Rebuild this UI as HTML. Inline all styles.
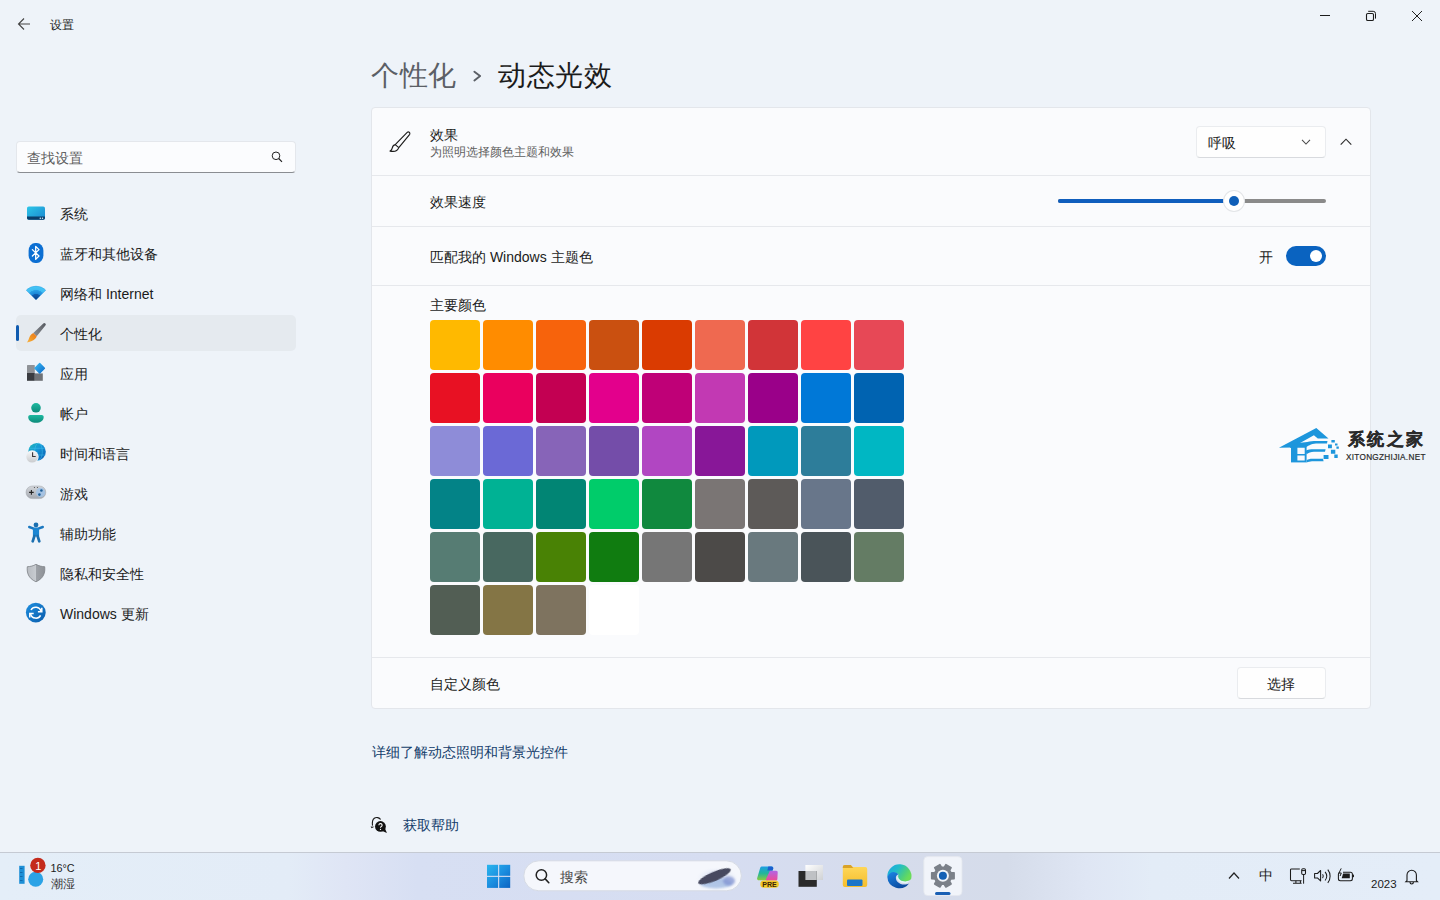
<!DOCTYPE html>
<html><head><meta charset="utf-8">
<style>
*{box-sizing:border-box;margin:0;padding:0}
html,body{width:1440px;height:900px;overflow:hidden}
body{background:#eef3f9;font-family:"Liberation Sans",sans-serif;color:#1b1b1b;position:relative}
.a{position:absolute}
.t14{font-size:14px;line-height:22px;white-space:nowrap}
.t12{font-size:12px;line-height:18px;white-space:nowrap}
.nav{position:absolute;left:16px;width:280px;height:36px}
.nav .lbl{position:absolute;left:44px;top:8px;font-size:14px;line-height:22px;white-space:nowrap;color:#1b1b1b}
.nav .ic{position:absolute;left:10px;top:8px;width:20px;height:20px}
.card{position:absolute;left:371px;top:107px;width:1000px;height:602px;background:#fafbfd;border:1px solid #e3e6eb;border-radius:4px}
.div{position:absolute;left:0;width:998px;height:1px;background:#e6e8ec}
.sw{position:absolute;width:50px;height:50px;border-radius:4px}
</style></head><body>

<!-- title bar -->
<svg class="a" style="left:17px;top:17px" width="14" height="14" viewBox="0 0 14 14"><path d="M7 1.5 1.5 7 7 12.5M1.5 7H13" fill="none" stroke="#444" stroke-width="1.1"/></svg>
<div class="a t12" style="left:50px;top:16px;color:#1b1b1b">设置</div>

<svg class="a" style="left:1319px;top:10px" width="12" height="12" viewBox="0 0 12 12"><path d="M1 5.5h10" stroke="#1b1b1b" stroke-width="1"/></svg>
<svg class="a" style="left:1365px;top:10px" width="12" height="12" viewBox="0 0 12 12"><rect x="1.5" y="3.5" width="7" height="7" rx="1.3" fill="none" stroke="#1b1b1b" stroke-width="1.1"/><path d="M3.2 1.3h5a2.3 2.3 0 0 1 2.3 2.3v5" fill="none" stroke="#1b1b1b" stroke-width="1"/></svg>
<svg class="a" style="left:1411px;top:10px" width="12" height="12" viewBox="0 0 12 12"><path d="M1 1l10 10M11 1 1 11" stroke="#222" stroke-width="1"/></svg>

<!-- search -->
<div class="a" style="left:16px;top:141px;width:280px;height:32px;background:#fbfcfe;border:1px solid #e4e7ec;border-bottom:1px solid #8a8d92;border-radius:4px"></div>
<div class="a t14" style="left:27px;top:147px;color:#5e5e5e">查找设置</div>
<svg class="a" style="left:270px;top:150px" width="14" height="14" viewBox="0 0 14 14"><circle cx="6" cy="5.8" r="3.8" fill="none" stroke="#222" stroke-width="1"/><path d="M8.7 8.5l3.3 3.4" stroke="#222" stroke-width="1.1"/></svg>

<!-- nav -->
<div class="nav" style="top:195px"><div class="lbl">系统</div></div>
<div class="nav" style="top:235px"><div class="lbl">蓝牙和其他设备</div></div>
<div class="nav" style="top:275px"><div class="lbl">网络和 Internet</div></div>
<div class="nav" style="top:315px;background:#e5eaef;border-radius:5px"><div class="a" style="left:0;top:10px;width:3px;height:16px;border-radius:2px;background:#0f5bb0"></div><div class="lbl">个性化</div></div>
<div class="nav" style="top:355px"><div class="lbl">应用</div></div>
<div class="nav" style="top:395px"><div class="lbl">帐户</div></div>
<div class="nav" style="top:435px"><div class="lbl">时间和语言</div></div>
<div class="nav" style="top:475px"><div class="lbl">游戏</div></div>
<div class="nav" style="top:515px"><div class="lbl">辅助功能</div></div>
<div class="nav" style="top:555px"><div class="lbl">隐私和安全性</div></div>
<div class="nav" style="top:595px"><div class="lbl">Windows 更新</div></div>

<svg class="a" style="left:0;top:0" width="60" height="640" viewBox="0 0 60 640">
<defs>
<linearGradient id="gSys" x1="0" y1="0" x2="1" y2="1"><stop offset="0" stop-color="#2cc6e8"/><stop offset="1" stop-color="#1a86d0"/></linearGradient>
<radialGradient id="gWifi" gradientUnits="userSpaceOnUse" cx="36" cy="300" r="13.8"><stop offset="0" stop-color="#0a3f86"/><stop offset=".42" stop-color="#0f5eb0"/><stop offset=".45" stop-color="#1a86d6"/><stop offset=".7" stop-color="#2a9fe6"/><stop offset=".73" stop-color="#3dbbf2"/><stop offset="1" stop-color="#45c6f6"/></radialGradient>
<linearGradient id="gBrush" x1="1" y1="0" x2="0" y2="1"><stop offset="0" stop-color="#54585e"/><stop offset="1" stop-color="#8f9398"/></linearGradient>
<linearGradient id="gTip" x1="1" y1="0" x2="0" y2="1"><stop offset="0" stop-color="#e8741a"/><stop offset=".6" stop-color="#f29a26"/><stop offset="1" stop-color="#f7b64a"/></linearGradient>
<linearGradient id="gDia" x1="0" y1="0" x2="1" y2="1"><stop offset="0" stop-color="#36b8f2"/><stop offset="1" stop-color="#0e6ccc"/></linearGradient>
<linearGradient id="gAcc" x1="0" y1="0" x2="0" y2="1"><stop offset="0" stop-color="#1db9a0"/><stop offset="1" stop-color="#0d8a7a"/></linearGradient>
<linearGradient id="gGlobe" x1="0" y1="0" x2="1" y2="1"><stop offset="0" stop-color="#1fb8b8"/><stop offset=".45" stop-color="#1596d6"/><stop offset="1" stop-color="#0a58ae"/></linearGradient>
<linearGradient id="gClock" x1="0" y1="0" x2="0" y2="1"><stop offset="0" stop-color="#f7f7f8"/><stop offset="1" stop-color="#c9cbce"/></linearGradient>
<linearGradient id="gPad" x1="0" y1="0" x2="0" y2="1"><stop offset="0" stop-color="#d3d6db"/><stop offset="1" stop-color="#a5a9b0"/></linearGradient>
<linearGradient id="gShield" x1="0" y1="0" x2="1" y2="0"><stop offset="0" stop-color="#b8bcc2"/><stop offset=".5" stop-color="#c8ccd1"/><stop offset=".5" stop-color="#9ea2a8"/><stop offset="1" stop-color="#8d9197"/></linearGradient>
<linearGradient id="gUpd" x1="0" y1="0" x2="1" y2="1"><stop offset="0" stop-color="#1e8fe0"/><stop offset="1" stop-color="#0b5cab"/></linearGradient>
</defs>
<!-- system -->
<rect x="27" y="206.5" width="18" height="13.3" rx="1.8" fill="url(#gSys)"/>
<path d="M27 216.6h18v1.4a1.8 1.8 0 0 1-1.8 1.8H28.8a1.8 1.8 0 0 1-1.8-1.8z" fill="#0b3e6b"/>
<circle cx="40.3" cy="218.2" r=".75" fill="#d6ecf8"/><circle cx="42.5" cy="218.2" r=".75" fill="#d6ecf8"/>
<!-- bluetooth -->
<rect x="28.6" y="243" width="14.8" height="20" rx="6.6" ry="7.6" fill="#0c6fd3"/>
<path d="M32.4 249.6l6.6 6.4-3.3 3.4v-13l3.3 3.2-6.6 6.4" fill="none" stroke="#fff" stroke-width="1.3" stroke-linejoin="round" stroke-linecap="round"/>
<!-- wifi -->
<path d="M36 300 26.2 290.2A13.8 13.8 0 0 1 45.8 290.2Z" fill="url(#gWifi)" stroke="#1a86d6" stroke-width=".3" stroke-linejoin="round"/>
<!-- brush -->
<path d="M43.3 323.6A1.45 1.45 0 0 1 45.4 325.6L36.7 336.2 33.3 333z" fill="url(#gBrush)"/>
<path d="M33.3 333C30.4 334.4 29.4 337 28.6 339.5 28.2 340.6 27.6 341.6 26.9 342.4 29.5 342.1 33 341 35.2 338.7 36 337.9 36.5 337.1 36.7 336.2z" fill="url(#gTip)"/>
<!-- apps -->
<rect x="27" y="365" width="7.8" height="8" rx=".6" fill="#8f9297"/>
<rect x="27" y="373" width="7.8" height="7.8" fill="#3a3c41"/>
<rect x="34.8" y="373.4" width="8" height="7.4" fill="#6f7277"/>
<path d="M39.7 363.5l4.7 4.8-4.7 4.7-4.7-4.7z" fill="url(#gDia)" stroke="url(#gDia)" stroke-width="1.4" stroke-linejoin="round"/>
<!-- account -->
<circle cx="36" cy="407.8" r="4.8" fill="url(#gAcc)"/>
<path d="M28.2 417c0-1.2.9-2 2-2h11.5c1.1 0 2 .8 2 2 0 3.6-3.5 5.8-7.7 5.8S28.2 420.6 28.2 417z" fill="url(#gAcc)"/>
<!-- time -->
<circle cx="37" cy="451.7" r="8.8" fill="url(#gGlobe)"/>
<ellipse cx="38.5" cy="451.7" rx="3.8" ry="8.6" fill="none" stroke="#43c4f0" stroke-width=".6" opacity=".8"/>
<path d="M29 448.3h16.2M28.6 455h16.8" stroke="#43c4f0" stroke-width=".6" opacity=".8"/>
<circle cx="32.1" cy="456.8" r="6.6" fill="#eef3f8"/>
<circle cx="32.1" cy="456.8" r="5.8" fill="url(#gClock)"/>
<path d="M32.6 452.3v4.2h3.1" fill="none" stroke="#3a3436" stroke-width="1.1"/>
<!-- games -->
<rect x="26" y="486" width="19.8" height="12.6" rx="6.3" fill="url(#gPad)" stroke="#9ea2a9" stroke-width=".5"/>
<path d="M31.4 490.1v4.6M29.1 492.4h4.6" stroke="#222" stroke-width="1.1"/>
<circle cx="40.6" cy="492.4" r="4.6" fill="#a3c3e6" opacity=".9"/>
<circle cx="41.4" cy="490.5" r="1.3" fill="#1f5f98"/><circle cx="39.4" cy="494.6" r="1.3" fill="#1f5f98"/>
<circle cx="34.4" cy="487.5" r=".5" fill="#333"/><circle cx="37.4" cy="487.5" r=".5" fill="#333"/>
<!-- accessibility -->
<circle cx="36" cy="524.9" r="2.4" fill="#1a6fb0"/>
<path d="M29.2 527l4.6 1.6h4.4l4.6-1.6" fill="none" stroke="#1b78c0" stroke-width="2.4" stroke-linecap="round" stroke-linejoin="round"/>
<rect x="32.9" y="528" width="6.2" height="8.6" rx="1.2" fill="#1a85d2"/>
<path d="M34.4 536 32.7 541.3M37.6 536l1.7 5.3" stroke="#1a6fb0" stroke-width="2.7" stroke-linecap="round"/>
<!-- shield -->
<path d="M36 564.3C38.8 566 41.8 566.6 44.7 566.7 45.3 572.3 44 578.2 36 581.8 28 578.2 26.7 572.3 27.3 566.7 30.2 566.6 33.2 566 36 564.3Z" fill="url(#gShield)" stroke="#7d8187" stroke-width=".8"/>
<!-- update -->
<circle cx="35.8" cy="612.6" r="9.9" fill="url(#gUpd)"/>
<path d="M41 611.3a5.4 5.4 0 0 0-10-1.3M30.6 614a5.4 5.4 0 0 0 10 1.3" fill="none" stroke="#fff" stroke-width="1.5"/>
<path d="M41.8 607.8v3.9h-3.9M29.8 617.5v-3.9h3.9" fill="none" stroke="#fff" stroke-width="1.5"/>
</svg>

<!-- header -->
<div class="a" style="left:371px;top:56px;font-size:28px;line-height:40px;letter-spacing:.6px;white-space:nowrap;color:#5b5f66">个性化</div>
<svg class="a" style="left:470px;top:68px" width="14" height="16" viewBox="0 0 14 16"><path d="M4.4 3.7 10.1 8.1 4.4 12.5" fill="none" stroke="#5b5f66" stroke-width="1.9" stroke-linecap="round" stroke-linejoin="round"/></svg>
<div class="a" style="left:498px;top:56px;font-size:28px;line-height:40px;letter-spacing:.6px;white-space:nowrap;color:#1b1b1b">动态光效</div>

<!-- card -->
<div class="card">
  <div class="div" style="top:67px"></div>
  <div class="div" style="top:118px"></div>
  <div class="div" style="top:177px"></div>
  <div class="div" style="top:549px"></div>
</div>

<svg class="a" style="left:384px;top:126px" width="32" height="32" viewBox="0 0 32 32"><path d="M11.2 18.6 23.2 6.4a1.6 1.6 0 0 1 2.5 1.9L14.8 21.6M11.2 18.6c-1.8.4-2.6 1.6-3 3.5-.3 1.5-1 2.3-2.1 3 2.8.6 7.3.4 8.7-3.5z" fill="none" stroke="#1b1b1b" stroke-width="1.15" stroke-linejoin="round"/></svg>
<div class="a t14" style="left:430px;top:124px">效果</div>
<div class="a t12" style="left:430px;top:143px;color:#5e5e5e">为照明选择颜色主题和效果</div>
<div class="a t14" style="left:430px;top:191px">效果速度</div>
<div class="a t14" style="left:430px;top:246px">匹配我的 Windows 主题色</div>
<div class="a t14" style="left:430px;top:294px">主要颜色</div>
<div class="a t14" style="left:430px;top:673px">自定义颜色</div>

<!-- dropdown -->
<div class="a" style="left:1196px;top:126px;width:130px;height:32px;background:#fefefe;border:1px solid #eaecef;border-bottom-color:#d8dade;border-radius:4px"></div>
<div class="a t14" style="left:1208px;top:132px">呼吸</div>
<svg class="a" style="left:1301px;top:137px" width="10" height="10" viewBox="0 0 10 10"><path d="M1 2.8l4 4.2 4-4.2" fill="none" stroke="#4a4a4a" stroke-width="1.05"/></svg>
<svg class="a" style="left:1339px;top:136px" width="14" height="12" viewBox="0 0 14 12"><path d="M1.7 8.6 7 3.2l5.3 5.4" fill="none" stroke="#2a2a2a" stroke-width="1.15"/></svg>

<!-- slider -->
<div class="a" style="left:1058px;top:199px;width:268px;height:4px;border-radius:2px;background:#8a8a8a"></div>
<div class="a" style="left:1058px;top:199px;width:176px;height:4px;border-radius:2px;background:#0f5ebd"></div>
<div class="a" style="left:1224px;top:191px;width:20px;height:20px;border-radius:50%;background:#fff;box-shadow:0 0 0 1px #e3e5e8"></div>
<div class="a" style="left:1228.7px;top:195.7px;width:10.6px;height:10.6px;border-radius:50%;background:#0f5fb8"></div>

<!-- toggle -->
<div class="a t14" style="left:1259px;top:246px">开</div>
<div class="a" style="left:1286px;top:246px;width:40px;height:20px;border-radius:10px;background:#0a63c0"></div>
<div class="a" style="left:1309.7px;top:249.7px;width:12.5px;height:12.5px;border-radius:50%;background:#fff"></div>

<!-- button -->
<div class="a" style="left:1237px;top:667px;width:89px;height:32px;background:#fefefe;border:1px solid #eaecef;border-bottom-color:#d8dade;border-radius:4px"></div>
<div class="a t14" style="left:1267px;top:673px">选择</div>

<div class="sw" style="left:430px;top:320px;background:#FFB900"></div>
<div class="sw" style="left:483px;top:320px;background:#FF8C00"></div>
<div class="sw" style="left:536px;top:320px;background:#F7630C"></div>
<div class="sw" style="left:589px;top:320px;background:#CA5010"></div>
<div class="sw" style="left:642px;top:320px;background:#DA3B01"></div>
<div class="sw" style="left:695px;top:320px;background:#EF6950"></div>
<div class="sw" style="left:748px;top:320px;background:#D13438"></div>
<div class="sw" style="left:801px;top:320px;background:#FF4343"></div>
<div class="sw" style="left:854px;top:320px;background:#E74856"></div>
<div class="sw" style="left:430px;top:373px;background:#E81123"></div>
<div class="sw" style="left:483px;top:373px;background:#EA005E"></div>
<div class="sw" style="left:536px;top:373px;background:#C30052"></div>
<div class="sw" style="left:589px;top:373px;background:#E3008C"></div>
<div class="sw" style="left:642px;top:373px;background:#BF0077"></div>
<div class="sw" style="left:695px;top:373px;background:#C239B3"></div>
<div class="sw" style="left:748px;top:373px;background:#9A0089"></div>
<div class="sw" style="left:801px;top:373px;background:#0078D7"></div>
<div class="sw" style="left:854px;top:373px;background:#0063B1"></div>
<div class="sw" style="left:430px;top:426px;background:#8E8CD8"></div>
<div class="sw" style="left:483px;top:426px;background:#6B69D6"></div>
<div class="sw" style="left:536px;top:426px;background:#8764B8"></div>
<div class="sw" style="left:589px;top:426px;background:#744DA9"></div>
<div class="sw" style="left:642px;top:426px;background:#B146C2"></div>
<div class="sw" style="left:695px;top:426px;background:#881798"></div>
<div class="sw" style="left:748px;top:426px;background:#0099BC"></div>
<div class="sw" style="left:801px;top:426px;background:#2D7D9A"></div>
<div class="sw" style="left:854px;top:426px;background:#00B7C3"></div>
<div class="sw" style="left:430px;top:479px;background:#038387"></div>
<div class="sw" style="left:483px;top:479px;background:#00B294"></div>
<div class="sw" style="left:536px;top:479px;background:#018574"></div>
<div class="sw" style="left:589px;top:479px;background:#00CC6A"></div>
<div class="sw" style="left:642px;top:479px;background:#10893E"></div>
<div class="sw" style="left:695px;top:479px;background:#7A7574"></div>
<div class="sw" style="left:748px;top:479px;background:#5D5A58"></div>
<div class="sw" style="left:801px;top:479px;background:#68768A"></div>
<div class="sw" style="left:854px;top:479px;background:#515C6B"></div>
<div class="sw" style="left:430px;top:532px;background:#567C73"></div>
<div class="sw" style="left:483px;top:532px;background:#486860"></div>
<div class="sw" style="left:536px;top:532px;background:#498205"></div>
<div class="sw" style="left:589px;top:532px;background:#107C10"></div>
<div class="sw" style="left:642px;top:532px;background:#767676"></div>
<div class="sw" style="left:695px;top:532px;background:#4C4A48"></div>
<div class="sw" style="left:748px;top:532px;background:#69797E"></div>
<div class="sw" style="left:801px;top:532px;background:#4A5459"></div>
<div class="sw" style="left:854px;top:532px;background:#647C64"></div>
<div class="sw" style="left:430px;top:585px;background:#525E54"></div>
<div class="sw" style="left:483px;top:585px;background:#847545"></div>
<div class="sw" style="left:536px;top:585px;background:#7E735F"></div>
<div class="sw" style="left:589px;top:585px;background:#FFFFFF"></div>

<!-- links -->
<div class="a t14" style="left:372px;top:741px;color:#143d6b">详细了解动态照明和背景光控件</div>
<div class="a t14" style="left:403px;top:814px;color:#143d6b">获取帮助</div>

<!-- taskbar -->
<div class="a" style="left:0;top:852px;width:1440px;height:48px;background:linear-gradient(90deg,#e4eef8 0%,#e3ecf7 20%,#dfe5f5 24%,#d7dff3 29%,#d6ddf1 50%,#d6dcec 62%,#d5dcea 70%,#dfe6f4 75.5%,#e3ecf7 80%,#e4edf8 100%);border-top:1px solid #c5cad3"></div>
<svg class="a" style="left:0;top:852px" width="1440" height="48" viewBox="0 852 1440 48">
<defs>
<linearGradient id="gWin" gradientUnits="userSpaceOnUse" x1="487" y1="864.6" x2="510" y2="888"><stop offset="0" stop-color="#2ab6ee"/><stop offset=".5" stop-color="#1c8fe0"/><stop offset="1" stop-color="#0b63c2"/></linearGradient>
<linearGradient id="gEdge" x1="0" y1="0" x2="1" y2="1"><stop offset="0" stop-color="#36c3d8"/><stop offset=".5" stop-color="#1e9ae6"/><stop offset="1" stop-color="#0b57b4"/></linearGradient>
<linearGradient id="gEdgeG" x1="0" y1="0" x2="1" y2="0"><stop offset="0" stop-color="#2fc6c0"/><stop offset="1" stop-color="#6ed95a"/></linearGradient>
<linearGradient id="gCop" x1="0" y1="0" x2="1" y2="1"><stop offset="0" stop-color="#2b8ff0"/><stop offset=".45" stop-color="#3fd39a"/><stop offset=".7" stop-color="#e868d0"/><stop offset="1" stop-color="#f58a5a"/></linearGradient>
<linearGradient id="gFold" x1="0" y1="0" x2="0" y2="1"><stop offset="0" stop-color="#ffd95c"/><stop offset="1" stop-color="#f5bd2c"/></linearGradient>
<linearGradient id="gTv" x1="0" y1="0" x2="1" y2="1"><stop offset="0" stop-color="#ffffff"/><stop offset="1" stop-color="#cfd1d4"/></linearGradient>
<filter id="fb1" x="-50%" y="-50%" width="200%" height="200%"><feGaussianBlur stdDeviation="1.2"/></filter><filter id="fb2" x="-50%" y="-50%" width="200%" height="200%"><feGaussianBlur stdDeviation=".5"/></filter>
<radialGradient id="gWhale" cx=".5" cy=".5" r=".5"><stop offset="0" stop-color="#a9b8e0"/><stop offset="1" stop-color="#e9eef8" stop-opacity="0"/></radialGradient>
</defs>
<!-- weather -->
<rect x="19.2" y="865.8" width="5.4" height="18" fill="#1d8fd6"/>
<path d="M20 868.5h2.5M20 872.5h2.5M20 876.5h2.5M20 880.5h2.5" stroke="#0e5fa0" stroke-width=".8"/>
<circle cx="35.7" cy="879.2" r="7.5" fill="#2ba3e6"/>
<circle cx="37.9" cy="865.4" r="7.7" fill="#c42b1c"/>
<text x="38.2" y="869.6" font-family="Liberation Sans" font-size="11" fill="#fff" text-anchor="middle">1</text>
<text x="50.5" y="871.8" font-family="Liberation Sans" font-size="10.8" fill="#1b1b1b">16°C</text>
<!-- start -->
<rect x="487" y="864.8" width="11.1" height="11" fill="url(#gWin)"/>
<rect x="499.2" y="864.8" width="11" height="11" fill="url(#gWin)"/>
<rect x="487" y="876.9" width="11.1" height="11" fill="url(#gWin)"/>
<rect x="499.2" y="876.9" width="11" height="11" fill="url(#gWin)"/>
<!-- search pill -->
<rect x="523.8" y="860.8" width="217.6" height="30" rx="15" fill="#f5f7fc" stroke="#d6dbe4" stroke-width="1"/>
<circle cx="541.4" cy="875" r="5.2" fill="none" stroke="#222" stroke-width="1.5"/>
<path d="M545.2 878.9l3.6 3.8" stroke="#222" stroke-width="1.6" stroke-linecap="round"/>
<ellipse cx="717" cy="878" rx="21" ry="11" fill="url(#gWhale)"/>
<ellipse cx="716" cy="883.5" rx="16" ry="5" fill="#a8c0e4" opacity=".85" filter="url(#fb1)"/>
<ellipse cx="729" cy="881" rx="6" ry="4.5" fill="#7d8fd0" opacity=".7" filter="url(#fb1)"/>
<ellipse cx="714.5" cy="876.3" rx="17.5" ry="4.6" transform="rotate(-23 714.5 876.3)" fill="#474a5e" filter="url(#fb2)"/>
<!-- copilot -->
<defs>
<linearGradient id="gCopL" x1="0" y1="0" x2="0" y2="1"><stop offset="0" stop-color="#1d9ee6"/><stop offset=".5" stop-color="#22b59c"/><stop offset="1" stop-color="#8ccc3c"/></linearGradient>
<linearGradient id="gCopR" x1="0" y1="0" x2="0" y2="1"><stop offset="0" stop-color="#b066e6"/><stop offset="1" stop-color="#ee4c94"/></linearGradient>
</defs>
<path d="M761.5 866.4h9.8c1.5 0 2.3 1 1.9 2.3l-3.9 10.2c-.4 1-1.3 1.3-2.2 1.3h-8.3c-1.3 0-2-1-1.6-2.2l2.8-9.6c.3-1.3 .9-2 1.5-2z" fill="url(#gCopL)"/>
<path d="M768.3 866.4h3c1.5 0 2.3 1 1.9 2.3l-.7 1.9h-5.2z" fill="#1b5fce"/>
<path d="M769.8 870.7h6.3c1.2 0 1.8.9 1.6 2l-.3 6.3c-.1 1-.9 1.6-1.8 1.6h-8.6c-.8 0-1.2-.6-1-1.3z" fill="url(#gCopR)"/>
<rect x="760.3" y="880.4" width="18.5" height="7.4" rx="3.6" fill="#f2c928"/>
<text x="769.5" y="887" font-family="Liberation Sans" font-size="7" font-weight="bold" fill="#3a2408" text-anchor="middle">PRE</text>
<!-- task view -->
<rect x="805.4" y="865" width="17.6" height="15" fill="url(#gTv)"/>
<rect x="798.5" y="871" width="18.3" height="15.8" fill="#2a2a2a"/>
<rect x="805.4" y="871" width="11.4" height="9" fill="#bfc1c4"/>
<!-- folder -->
<path d="M842.8 867a2 2 0 0 1 2-2h6l2 2h12.4a2 2 0 0 1 2 2v16a2 2 0 0 1-2 2h-20.4a2 2 0 0 1-2-2z" fill="url(#gFold)"/>
<path d="M842.8 867a2 2 0 0 1 2-2h6l2.5 3h-10.5z" fill="#d9a229"/>
<rect x="847" y="879.5" width="15.5" height="6.5" rx="1" fill="#1b76c9"/>
<!-- edge -->
<defs>
<linearGradient id="gEdgeTop" x1="0" y1="0" x2="1" y2=".5"><stop offset="0" stop-color="#1aa6e6"/><stop offset=".45" stop-color="#22bcc8"/><stop offset=".8" stop-color="#4fd07a"/><stop offset="1" stop-color="#6adc5a"/></linearGradient>
<linearGradient id="gEdgeBlue" x1="0" y1="0" x2=".6" y2="1"><stop offset="0" stop-color="#1b86e6"/><stop offset="1" stop-color="#0b4a9e"/></linearGradient>
</defs>
<path d="M897 877.5C897 880.5 901 883.5 906 883.2L909.6 881.5 904 880.5C900.5 880 899 878 899 876z" fill="#e4f5fb"/>
<path d="M887.3 876.8A12.1 12.1 0 1 1 911.3 878.6C910.3 881 906.3 881.9 902.6 881.1 899 880.3 897.3 877.2 898.6 874.5 895.6 871.6 890 872 887.3 876.8Z" fill="url(#gEdgeTop)"/>
<path d="M887.3 876.8A12.1 12.1 0 0 0 909.2 883.2C905.5 885.6 900.5 884.8 897.7 882 895 879.3 895.4 874.8 898.6 874.5 895.5 870.6 889.6 871.2 887.3 876.8Z" fill="url(#gEdgeBlue)"/>
<!-- settings active -->
<rect x="923.8" y="856.6" width="38.2" height="39" rx="4" fill="#f1f4fa" stroke="#e3e7ee" stroke-width=".8"/>
<path d="M950.93 872.72 L954.10 872.80 L954.10 878.80 L950.93 878.88 L949.58 881.21 L951.10 884.00 L945.90 887.00 L944.25 884.29 L941.55 884.29 L939.90 887.00 L934.70 884.00 L936.22 881.21 L934.87 878.88 L931.70 878.80 L931.70 872.80 L934.87 872.72 L936.22 870.39 L934.70 867.60 L939.90 864.60 L941.55 867.31 L944.25 867.31 L945.90 864.60 L951.10 867.60 L949.58 870.39Z" fill="#7b8089" stroke="#7b8089" stroke-width="1.6" stroke-linejoin="round"/>
<circle cx="942.9" cy="875.8" r="6" fill="#f2f5fa"/>
<circle cx="942.9" cy="875.8" r="4" fill="#1460b5"/>
<rect x="935" y="892" width="15.5" height="3" rx="1.5" fill="#1a5fb4"/>
<!-- tray -->
<path d="M1229 878.5l5-5.5 5 5.5" fill="none" stroke="#222" stroke-width="1.2"/>
<path d="M1299.8 868.9h-8.2a1.1 1.1 0 0 0-1.1 1.1v9.6a1.1 1.1 0 0 0 1.1 1.1h10" fill="none" stroke="#1b1b1b" stroke-width="1.05"/>
<path d="M1295.9 880.7v2.4M1300.4 880.7v2.4M1293 883.3h8.6" fill="none" stroke="#1b1b1b" stroke-width="1.05"/>
<rect x="1301.7" y="868.7" width="3.8" height="5.8" rx="1.2" fill="none" stroke="#1b1b1b" stroke-width="1.05"/>
<path d="M1303.6 874.5v9.2M1302 870.6h3.2" fill="none" stroke="#1b1b1b" stroke-width="1"/>
<path d="M1314.6 873.5h2.8l3.2-3v10.4l-3.2-3h-2.8z" fill="none" stroke="#1b1b1b" stroke-width="1.05" stroke-linejoin="round"/>
<path d="M1322.6 874.3a3.2 3.2 0 0 1 0 3.8M1325.1 871.9a7 7 0 0 1 0 8.6M1327.8 869.6a10.6 10.6 0 0 1 0 13.2" fill="none" stroke="#1b1b1b" stroke-width="1.05"/>
<path d="M1339.5 872.4c-.7.3-1.1 1-1.1 1.9v4.4c0 1.1.9 2 2 2h10c1.1 0 2-.9 2-2v-4.4c0-1.1-.9-2-2-2h-7.4" fill="none" stroke="#1b1b1b" stroke-width="1.05"/>
<path d="M1341.7 878.3l1.4-4.9h6.7v4.9z" fill="#1b1b1b"/>
<rect x="1352.4" y="874.6" width="1.6" height="2.6" rx=".6" fill="#1b1b1b"/>
<path d="M1341.2 868.4l-2.2 4.6h2.3l-1.2 3" fill="none" stroke="#1b1b1b" stroke-width="1" stroke-linejoin="round"/>
<text x="1371" y="888" font-family="Liberation Sans" font-size="11.5" fill="#1b1b1b">2023</text>
<path d="M1407 880.5v-5.5a4.7 4.7 0 0 1 9.4 0v5.5l1.2 1.3h-11.8z M1410 882.3a1.7 1.7 0 0 0 3.4 0" fill="none" stroke="#1b1b1b" stroke-width="1.1"/>
</svg>
<div class="a t14" style="left:560px;top:866px;color:#4a4a4a">搜索</div>
<div class="a t14" style="left:1259px;top:864px;color:#1b1b1b">中</div>
<div class="a t12" style="left:51px;top:874.5px;color:#333">潮湿</div>

<!-- watermark -->
<svg class="a" style="left:1270px;top:420px" width="75" height="50" viewBox="0 0 75 50">
<g fill="#1d96dc">
<path d="M8.9 27.8 46.3 7.9 58.5 18.6H47.8L43.9 15.2 22 27.4z"/>
<path d="M21 26.6h15.6v15.8H21z"/>
<path d="M20 27.6 28.6 22.9V28H20z"/>
<path d="M27.4 22.9C35 22.9 40 21 46 21H57.5L57 23.4H46C41 23.4 37.5 26.3 35.2 27.8H27.4z"/>
<path d="M35.6 30.8C37.6 29.7 40.5 29.3 44 29.3H55.6L55 31.8H44C40.7 31.8 38.6 32.8 36.6 34.3z"/>
<path d="M36.6 40.3C38.2 39.3 40 38.8 42 38.8H53L53.6 41.2H42C40 41.2 38.5 42 36.6 42.4z"/>
<path d="M61.4 20h3.4v2.6h-3.4zM65 23.5h2.5v2h-2.5zM58 24.4h3.9v3.9H58zM66.4 26.4h2.4v2.4h-2.4zM60.9 29.8h4.4v3.9h-4.4zM53.6 35.1h4.9v3.9h-4.9zM64.3 34.6h3.4v3.4h-3.4z"/>
</g>
<path d="M27.4 27.8h7.3v6.3h-7.3zM27.4 35.6h7.3v4.9h-7.3z" fill="#f7f9fc"/>
</svg>
<div class="a" style="left:1348px;top:429px;font-size:17px;line-height:21px;font-weight:bold;color:#2a2a2a;white-space:nowrap;letter-spacing:2.4px;-webkit-text-stroke:.3px #2a2a2a">系统之家</div>
<div class="a" style="left:1346px;top:452px;font-size:8.2px;line-height:11px;color:#2a2a2a;letter-spacing:.3px;white-space:nowrap;font-weight:normal;-webkit-text-stroke:.2px #2a2a2a">XITONGZHIJIA.NET</div>

<!-- help icon -->
<svg class="a" style="left:368px;top:814px" width="22" height="22" viewBox="0 0 22 22">
<path d="M12.6 5.6C11.5 3.6 8.3 2.7 6.3 4.3 4.5 5.7 4.1 8.6 4.5 11.6" fill="none" stroke="#1b1b1b" stroke-width="1.1"/>
<path d="M2.6 12.4 3.6 14.3 6.5 12.8z" fill="#1b1b1b"/>
<circle cx="12.45" cy="12.45" r="5.4" fill="#111"/>
<path d="M14.3 16.9 18.9 18.9 16.9 14.3z" fill="#111"/>
<path d="M10.9 11.2a1.6 1.6 0 1 1 2.4 1.4c-.6.3-.8.6-.8 1.2" fill="none" stroke="#fff" stroke-width="1.1"/>
<circle cx="12.5" cy="15.4" r=".65" fill="#fff"/>
</svg>
</body></html>
